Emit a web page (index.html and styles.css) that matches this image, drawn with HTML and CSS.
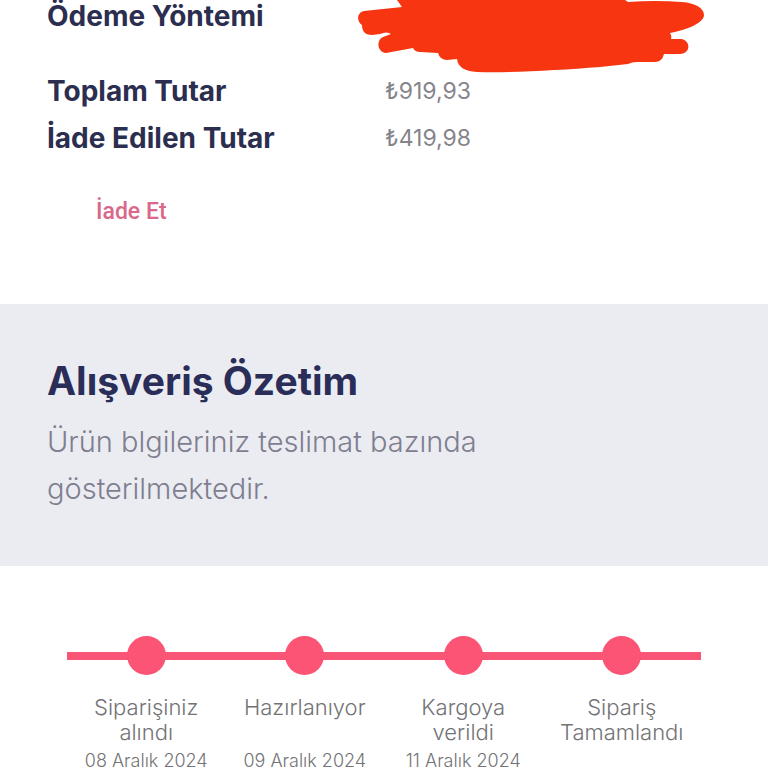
FILE: index.html
```html
<!DOCTYPE html>
<html lang="tr">
<head>
<meta charset="utf-8">
<meta name="viewport" content="width=device-width, initial-scale=1">
<title>Alışveriş Özetim</title>
<link rel="stylesheet" href="styles.css">
</head>
<body>
<main>
  <section class="payment">
    <dl class="totals">
      <div class="row row-method">
        <dt>Ödeme Yöntemi</dt>
        <dd>
          <svg class="scribble" viewBox="358 0 347 73" width="347" height="73" aria-hidden="true">
            <path fill="#f73511" d="M397 0 L402 7 L364 11 C356 13 357 22 362 25 C362 32 366 35 372 35 L380 34 Q387 31 391 34 L383 37 C376 40 377 52 386 53 L413 48 Q415 52 420 52 L438 53 Q440 60 447 60 L457 59 C458 67 464 71 477 72 C515 73 560 70 600 67 L628 64 Q632 62 637 62 L655 62 Q662 62 664 54 L680 54 C691 54 691 40 681 39 L671 39 Q672 36 670 33 C682 31 704 24 704 15 C704 8 695 3 682 2 Q655 0 628 2 L625 0 Z"/>
          </svg>
        </dd>
      </div>
      <div class="row"><dt>Toplam Tutar</dt><dd>₺919,93</dd></div>
      <div class="row"><dt>İade Edilen Tutar</dt><dd>₺419,98</dd></div>
    </dl>
    <button class="refund" type="button">İade Et</button>
  </section>
  <section class="summary">
    <h1>Alışveriş Özetim</h1>
    <p>Ürün blgileriniz teslimat bazında gösterilmektedir.</p>
  </section>
  <ol class="steps">
    <li><span class="dot"></span><span class="label">Siparişiniz alındı</span><time datetime="2024-12-08">08 Aralık 2024</time></li>
    <li><span class="dot"></span><span class="label">Hazırlanıyor</span><time datetime="2024-12-09">09 Aralık 2024</time></li>
    <li><span class="dot"></span><span class="label">Kargoya verildi</span><time datetime="2024-12-11">11 Aralık 2024</time></li>
    <li><span class="dot"></span><span class="label">Sipariş Tamamlandı</span></li>
  </ol>
</main>
</body>
</html>
```
FILE: styles.css
```css
* {
  box-sizing: border-box;
}

body {
  margin: 0;
  background: #fff;
  color: #85858b;
  font-family: Inter, "Open Sans", sans-serif;
}

.payment {
  padding: 0 47px 72px;
}

.totals {
  margin: 0;
}

.row {
  display: grid;
  grid-template-columns: 338px 1fr;
  line-height: 47px;
}

.row-method {
  height: 68px;
  line-height: 32px;
}

.row dt {
  color: #2b2e4f;
  font-size: 28px;
  font-weight: 700;
}

.row dd {
  position: relative;
  margin: 0;
  font-size: 23px;
}

.scribble {
  position: absolute;
  top: 0;
  left: -27px;
}

.refund {
  display: block;
  margin: 30px 0 0 49px;
  padding: 0;
  border: 0;
  background: none;
  color: #d9688a;
  font: 500 23px/40px Roboto, sans-serif;
}

.summary {
  padding: 48px 47px 54px;
  background: #ebecf2;
}

.summary h1 {
  margin: 0 0 8px;
  color: #2a2d57;
  font-size: 39px;
  line-height: 58px;
  font-weight: 700;
}

.summary p {
  max-width: 480px;
  margin: 0;
  color: #7f7e8f;
  font-size: 29px;
  line-height: 47px;
  font-weight: 300;
}

.steps {
  display: grid;
  grid-template-columns: repeat(4, 1fr);
  margin: 70px 67px 0;
  padding: 0;
  list-style: none;
  text-align: center;
  color: #737376;
  font-weight: 300;
  background: linear-gradient(#f95576, #f95576) 0 16px / 100% 8px no-repeat;
}

.steps li {
  display: flex;
  flex-direction: column;
  align-items: center;
}

.dot {
  width: 39px;
  height: 39px;
  margin-bottom: 20px;
  border-radius: 50%;
  background: #fb5475;
}

.label {
  width: min-content;
  min-height: 50px;
  font-size: 22px;
  line-height: 25px;
}

.steps time {
  margin-top: 8px;
  font-size: 18px;
  line-height: 15px;
  white-space: nowrap;
}
```
